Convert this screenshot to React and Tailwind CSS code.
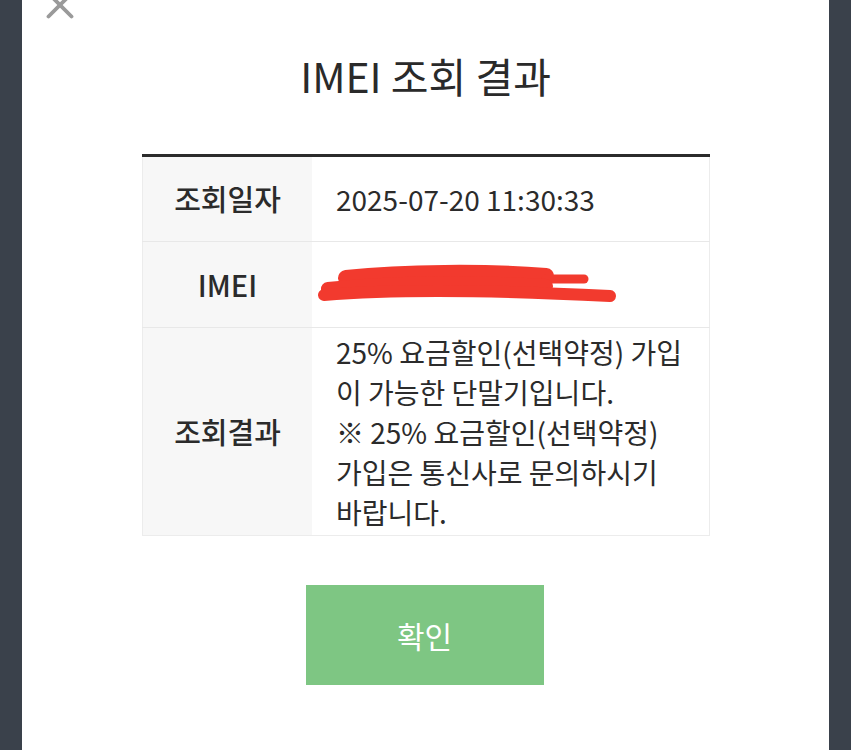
import { X } from 'lucide-react';

const font = { fontFamily: '"Noto Sans CJK KR", "Noto Sans", sans-serif' };

function Redaction() {
  return (
    <svg width="310" height="50" viewBox="0 0 310 50" className="block">
      <g stroke="#f23a2e" strokeLinecap="round" fill="none">
        <path d="M32 16 C90 10 170 9 232 14" strokeWidth="16" />
        <path d="M232 17 L270 17" strokeWidth="9" />
        <path d="M14 27 C80 20 160 20 232 24" strokeWidth="14" />
        <path d="M10 33 C80 27 180 28 296 34" strokeWidth="12" />
      </g>
    </svg>
  );
}

export default function App() {
  return (
    <div className="w-[851px] h-[750px] bg-[#3a414b] overflow-hidden flex" style={font}>
      <div className="ml-[22px] w-[807px] h-full bg-white relative">
        <X className="absolute left-[15px] top-[-18px] w-[46px] h-[46px] text-[#9a9a9a]" strokeWidth={2} />

        <h1 className="pt-[46px] text-center text-[41px] leading-[58px] text-[#2a2a2a]">
          IMEI 조회 결과
        </h1>

        <div className="mt-[50px] ml-[120px] w-[568px] border-t-[3px] border-[#2b2b2b]">
          <div className="flex h-[85px] border-b border-[#e8e8e8]">
            <div className="w-[170px] bg-[#f7f7f7] flex items-center justify-center text-[29px] font-medium text-[#2b2b2b] border-l border-[#ececec]">
              조회일자
            </div>
            <div className="flex-1 flex items-center pl-[24px] text-[28px] text-[#2b2b2b] border-r border-[#ececec]">
              2025-07-20 11:30:33
            </div>
          </div>
          <div className="flex h-[86px] border-b border-[#e8e8e8]">
            <div className="w-[170px] bg-[#f7f7f7] flex items-center justify-center text-[29px] font-medium text-[#2b2b2b] border-l border-[#ececec]">
              IMEI
            </div>
            <div className="flex-1 flex items-center pl-[2px] pt-[4px] border-r border-[#ececec]">
              <Redaction />
            </div>
          </div>
          <div className="flex h-[208px] border-b border-[#ececec]">
            <div className="w-[170px] bg-[#f7f7f7] flex items-center justify-center text-[29px] font-medium text-[#2b2b2b] border-l border-[#ececec]">
              조회결과
            </div>
            <div className="flex-1 flex items-center pl-[24px] text-[28px] leading-[40px] text-[#2b2b2b] border-r border-[#ececec] whitespace-nowrap">
              <p>
                25% 요금할인(선택약정) 가입
                <br />이 가능한 단말기입니다.
                <br />※ 25% 요금할인(선택약정)
                <br />가입은 통신사로 문의하시기
                <br />바랍니다.
              </p>
            </div>
          </div>
        </div>

        <div className="mt-[49px] flex justify-center">
          <button
            type="button"
            className="ml-[-2px] w-[238px] h-[100px] bg-[#7ec683] text-white text-[30px] flex items-center justify-center"
          >
            확인
          </button>
        </div>
      </div>
    </div>
  );
}
